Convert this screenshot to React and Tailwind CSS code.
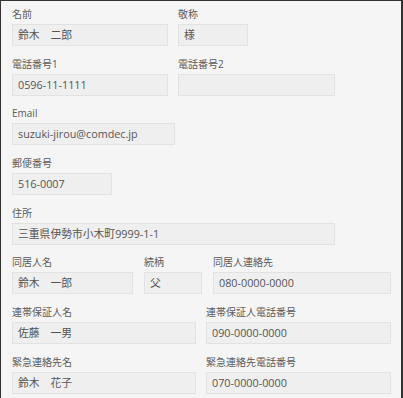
import React from 'react';

const rows = [
  [
    { label: '名前', value: '鈴木　二郎', w: 'w-[156px]' },
    { label: '敬称', value: '様', w: 'w-[70px]' },
  ],
  [
    { label: '電話番号1', value: '0596-11-1111', w: 'w-[156px]' },
    { label: '電話番号2', value: '', w: 'w-[157px]' },
  ],
  [{ label: 'Email', value: 'suzuki-jirou@comdec.jp', w: 'w-[163px]' }],
  [{ label: '郵便番号', value: '516-0007', w: 'w-[100px]' }],
  [{ label: '住所', value: '三重県伊勢市小木町9999-1-1', w: 'w-[323px]' }],
  [
    { label: '同居人名', value: '鈴木　一郎', w: 'w-[121px]' },
    { label: '続柄', value: '父', w: 'w-[58px]' },
    { label: '同居人連絡先', value: '080-0000-0000', w: 'w-[178px]' },
  ],
  [
    { label: '連帯保証人名', value: '佐藤　一男', w: 'w-[184px]' },
    { label: '連帯保証人電話番号', value: '090-0000-0000', w: 'w-[185px]' },
  ],
  [
    { label: '緊急連絡先名', value: '鈴木　花子', w: 'w-[184px]' },
    { label: '緊急連絡先電話番号', value: '070-0000-0000', w: 'w-[185px]' },
  ],
];

const Field = ({ label, value, w }) => (
  <div className={`flex flex-col ${w}`}>
    <div className="h-[14px] mb-[3px] text-[10px] leading-[14px] text-[#5a5a5a]">{label}</div>
    <div className="h-[22px] border border-[#e2e2e2] bg-[#efefef] flex items-center pl-[5px] text-[10.8px] text-[#555] whitespace-nowrap">
      {value}
    </div>
  </div>
);

export default function App() {
  return (
    <div
      className="w-[403px] h-[398px] overflow-hidden bg-[#f5f5f5] border-l border-t border-r-2 border-[#333] pl-[11px] pt-[6px] flex flex-col gap-[10.7px]"
      style={{ fontFamily: '"Open Sans", "Noto Sans CJK JP", sans-serif' }}
    >
      {rows.map((row, i) => (
        <div key={i} className={`flex ${i === 5 ? 'gap-[11px]' : 'gap-[10px]'}`}>
          {row.map((f) => (
            <Field key={f.label} {...f} />
          ))}
        </div>
      ))}
    </div>
  );
}
